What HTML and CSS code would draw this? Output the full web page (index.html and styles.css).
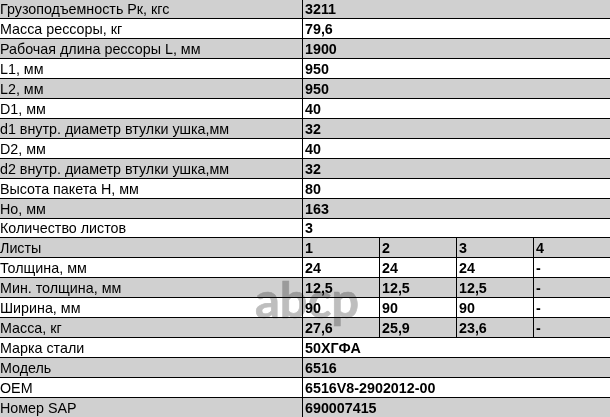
FILE: index.html
```html
<!DOCTYPE html>
<html lang="ru">
<head>
<meta charset="utf-8">
<title>Характеристики рессоры</title>
<link rel="stylesheet" href="styles.css">
</head>
<body>
<div class="page">
  <div class="specs">
    <div class="row alt"><div class="label">Грузоподъемность Рк, кгс</div><div class="val full">3211</div></div>
    <div class="row"><div class="label">Масса рессоры, кг</div><div class="val full">79,6</div></div>
    <div class="row alt"><div class="label">Рабочая длина рессоры L, мм</div><div class="val full">1900</div></div>
    <div class="row"><div class="label">L1, мм</div><div class="val full">950</div></div>
    <div class="row alt"><div class="label">L2, мм</div><div class="val full">950</div></div>
    <div class="row"><div class="label">D1, мм</div><div class="val full">40</div></div>
    <div class="row alt"><div class="label">d1 внутр. диаметр втулки ушка,мм</div><div class="val full">32</div></div>
    <div class="row"><div class="label">D2, мм</div><div class="val full">40</div></div>
    <div class="row alt"><div class="label">d2 внутр. диаметр втулки ушка,мм</div><div class="val full">32</div></div>
    <div class="row"><div class="label">Высота пакета H, мм</div><div class="val full">80</div></div>
    <div class="row alt"><div class="label">Но, мм</div><div class="val full">163</div></div>
    <div class="row short"><div class="label">Количество листов</div><div class="val full">3</div></div>
    <div class="row alt"><div class="label">Листы</div><div class="val">1</div><div class="val">2</div><div class="val">3</div><div class="val">4</div></div>
    <div class="row"><div class="label">Толщина, мм</div><div class="val">24</div><div class="val">24</div><div class="val">24</div><div class="val">-</div></div>
    <div class="row alt"><div class="label">Мин. толщина, мм</div><div class="val">12,5</div><div class="val">12,5</div><div class="val">12,5</div><div class="val">-</div></div>
    <div class="row"><div class="label">Ширина, мм</div><div class="val">90</div><div class="val">90</div><div class="val">90</div><div class="val">-</div></div>
    <div class="row alt"><div class="label">Масса, кг</div><div class="val">27,6</div><div class="val">25,9</div><div class="val">23,6</div><div class="val">-</div></div>
    <div class="row"><div class="label">Марка стали</div><div class="val full">50ХГФА</div></div>
    <div class="row alt"><div class="label">Модель</div><div class="val full">6516</div></div>
    <div class="row"><div class="label">OEM</div><div class="val full">6516V8-2902012-00</div></div>
    <div class="row alt"><div class="label">Номер SAP</div><div class="val full">690007415</div></div>
  </div>
  <div class="watermark">abcp</div>
</div>
</body>
</html>
```

FILE: styles.css
```css
html, body {
  margin: 0;
  padding: 0;
  background: #ffffff;
  overflow: hidden;
}

.page {
  position: relative;
  width: 610px;
  height: 417px;
  overflow: hidden;
  font-family: "Liberation Sans", Arial, Helvetica, sans-serif;
  font-size: 14.3px;
  color: #000;
}

.specs {
  margin: -1px 0 0 -2px;
  width: 613px;
}

.row {
  display: grid;
  grid-template-columns: 305px repeat(4, 77px);
  border-bottom: 1px solid #000;
  background: #ffffff;
}

.row.alt {
  background: #d0d0d0;
}

.label,
.val {
  box-sizing: border-box;
  height: 19px;
  line-height: 18px;
  padding: 1px 0 0 2px;
  border-right: 1px solid #000;
  white-space: nowrap;
  overflow: hidden;
}

.row.short .label,
.row.short .val {
  height: 18px;
  line-height: 17px;
}

.val {
  font-weight: bold;
}

.val.full {
  grid-column: span 4;
}

.watermark {
  position: absolute;
  left: 255px;
  top: 269px;
  font-family: Lato, "Liberation Sans", sans-serif;
  font-size: 49px;
  font-weight: 700;
  letter-spacing: 0;
  line-height: 60px;
  color: #bebebe;
  -webkit-text-stroke: 0.6px #bebebe;
  mix-blend-mode: multiply;
  pointer-events: none;
}
```
